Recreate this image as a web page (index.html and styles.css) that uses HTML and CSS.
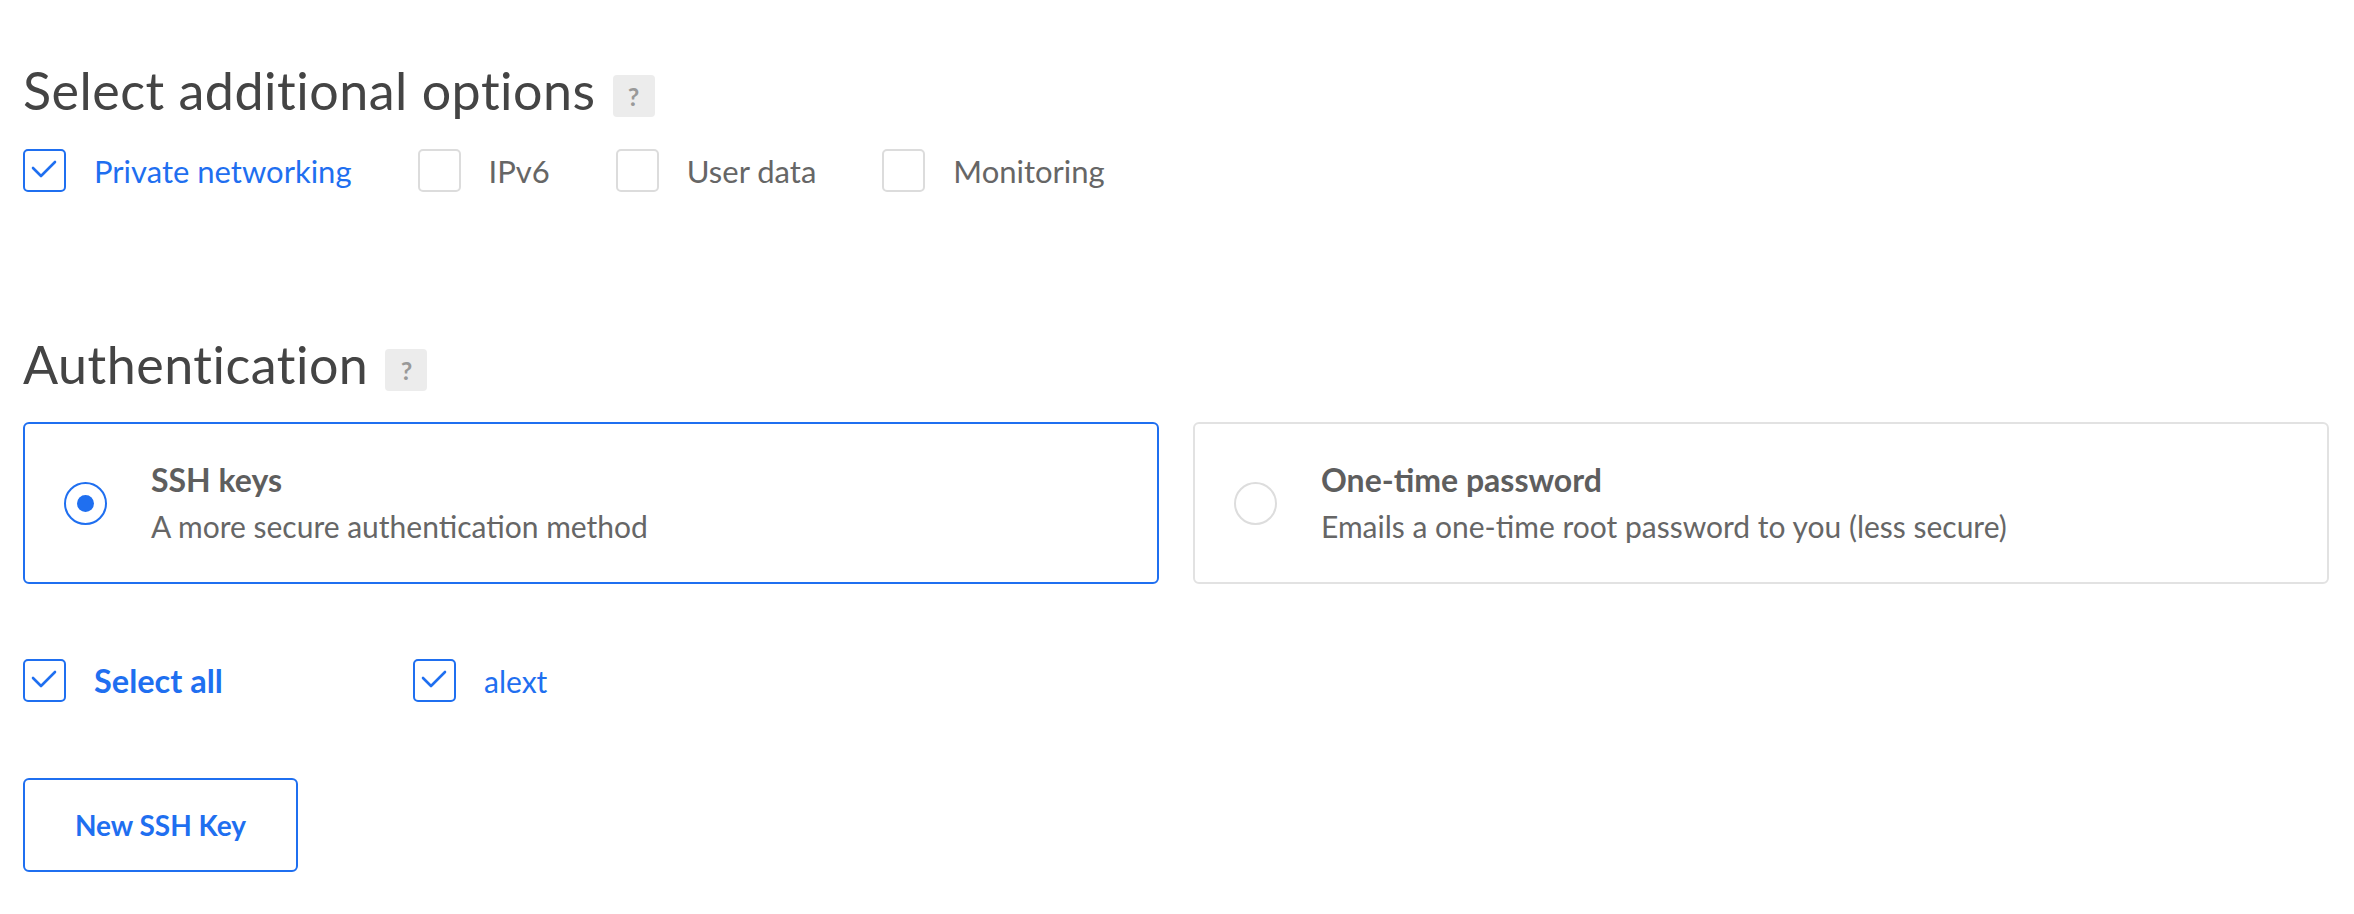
FILE: index.html
```html
<!DOCTYPE html>
<html lang="en">
<head>
<meta charset="utf-8">
<title>Droplet options</title>
<link rel="stylesheet" href="styles.css">
</head>
<body>
<main class="page">
  <section class="section">
    <div class="section-head">
      <h2 class="section-title">Select additional options</h2>
      <span class="help">?</span>
    </div>
    <div class="options">
      <label class="check is-checked">
        <span class="box"><svg viewBox="2 2 39 39" width="39" height="39"><polyline points="10,19 18,27 32,13"/></svg></span>
        <span class="check-label">Private networking</span>
      </label>
      <label class="check">
        <span class="box"></span>
        <span class="check-label">IPv6</span>
      </label>
      <label class="check">
        <span class="box"></span>
        <span class="check-label">User data</span>
      </label>
      <label class="check">
        <span class="box"></span>
        <span class="check-label">Monitoring</span>
      </label>
    </div>
  </section>

  <section class="section auth">
    <div class="section-head">
      <h2 class="section-title">Authentication</h2>
      <span class="help">?</span>
    </div>
    <div class="cards">
      <div class="card is-selected">
        <span class="radio"><span class="dot"></span></span>
        <div class="card-text">
          <div class="card-title">SSH keys</div>
          <div class="card-desc">A more secure authentication method</div>
        </div>
      </div>
      <div class="card">
        <span class="radio"></span>
        <div class="card-text">
          <div class="card-title">One-time password</div>
          <div class="card-desc">Emails a one-time root password to you (less secure)</div>
        </div>
      </div>
    </div>
    <div class="keys">
      <label class="check is-checked">
        <span class="box"><svg viewBox="2 2 39 39" width="39" height="39"><polyline points="10,19 18,27 32,13"/></svg></span>
        <span class="check-label strong">Select all</span>
      </label>
      <label class="check is-checked">
        <span class="box"><svg viewBox="2 2 39 39" width="39" height="39"><polyline points="10,19 18,27 32,13"/></svg></span>
        <span class="check-label">alext</span>
      </label>
    </div>
    <button class="btn" type="button">New SSH Key</button>
  </section>
</main>
</body>
</html>
```

FILE: styles.css
```css
* { box-sizing: border-box; }

html, body {
  margin: 0;
  background: #ffffff;
}

body {
  font-family: "Lato", "Open Sans", sans-serif;
  color: #666666;
}

.page {
  padding: 60px 25px 0 23px;
}

.section-head {
  display: flex;
  align-items: flex-start;
  gap: 17px;
}

.section-title {
  margin: 0;
  font-size: 52px;
  line-height: 60px;
  font-weight: 400;
  letter-spacing: 0.5px;
  color: #444444;
}

.help {
  margin-top: 15px;
  width: 42px;
  height: 42px;
  border-radius: 4px;
  background: #ececec;
  color: #999999;
  font-size: 25px;
  font-weight: 700;
  display: flex;
  align-items: center;
  justify-content: center;
}

.options {
  margin-top: 29px;
  display: flex;
  align-items: center;
}

.check {
  display: flex;
  align-items: center;
  gap: 28px;
  margin-right: 66px;
  font-size: 31px;
  color: #666666;
}

.box {
  width: 43px;
  height: 43px;
  border: 2px solid #dcdcdc;
  border-radius: 5px;
  display: flex;
  align-items: center;
  justify-content: center;
  flex: none;
}

.box svg {
  display: block;
  fill: none;
  stroke: #1f6ff0;
  stroke-width: 2.6;
  stroke-linecap: round;
  stroke-linejoin: round;
}

.is-checked .box {
  border-color: #1f6ff0;
}

.is-checked .check-label {
  color: #1f6ff0;
}

.check-label.strong {
  font-weight: 700;
  font-size: 32.5px;
}

.keys .check-label {
  font-size: 30px;
}

.keys .check-label.strong {
  font-size: 32.5px;
}

.auth {
  margin-top: 142px;
}

.cards {
  margin-top: 28px;
  display: grid;
  grid-template-columns: 1fr 1fr;
  gap: 34px;
}

.card {
  height: 162px;
  border: 2px solid #e2e2e2;
  border-radius: 6px;
  padding: 0 39px;
  display: flex;
  align-items: center;
  gap: 44px;
}

.card.is-selected {
  border-color: #1f6ff0;
}

.radio {
  width: 43px;
  height: 43px;
  border: 2px solid #dddddd;
  border-radius: 50%;
  display: flex;
  align-items: center;
  justify-content: center;
  flex: none;
}

.is-selected .radio {
  border-color: #1f6ff0;
}

.dot {
  width: 17px;
  height: 17px;
  border-radius: 50%;
  background: #1f6ff0;
}

.card-title {
  font-size: 32px;
  line-height: 40px;
  font-weight: 700;
  color: #5e5e5e;
}

.card-desc {
  margin-top: 6px;
  font-size: 30px;
  line-height: 40px;
  color: #666666;
}

.keys {
  margin-top: 75px;
  display: grid;
  grid-template-columns: 390px auto;
  justify-content: start;
}

.keys .check {
  margin-right: 0;
}

.btn {
  margin-top: 76px;
  width: 275px;
  height: 94px;
  border: 2px solid #1f6ff0;
  border-radius: 6px;
  background: #ffffff;
  color: #1f6ff0;
  font-family: "Lato", "Open Sans", sans-serif;
  font-size: 28px;
  font-weight: 700;
  display: block;
}
```
